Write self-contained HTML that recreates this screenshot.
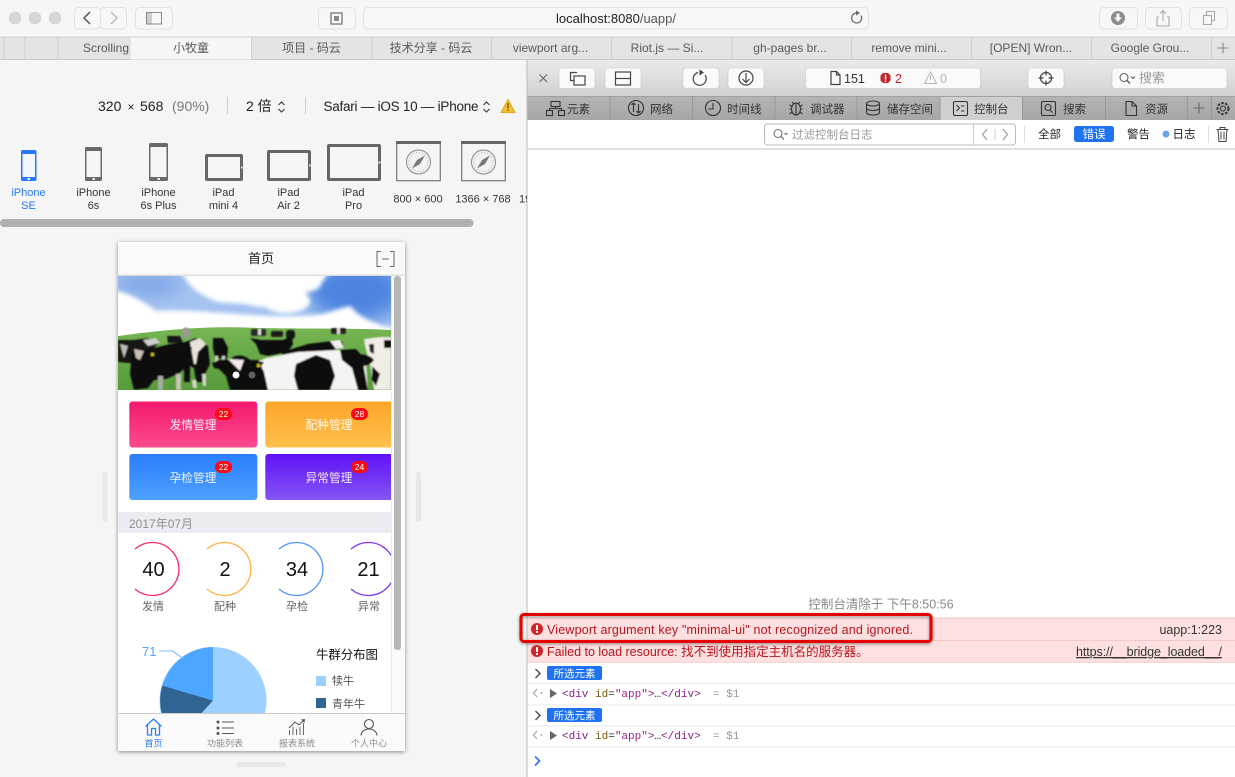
<!DOCTYPE html>
<html><head><meta charset="utf-8"><style>
html,body{margin:0;padding:0;width:1235px;height:777px;overflow:hidden;background:#f5f5f5}
svg{display:block}
svg.root{filter:blur(.3px)}
text{font-family:"Liberation Sans","Noto Sans CJK SC",sans-serif;white-space:pre}
.m{text-anchor:middle}
.tab{font-size:12px;fill:#5a5a5a;text-anchor:middle}
.dev{font-size:11px;fill:#333;text-anchor:middle}
.ic{fill:none;stroke:#444;stroke-width:1.2}
.btn{fill:#f7f7f7;stroke:#e2e2e2}
.dbtn{fill:#fafafa;stroke:#c8c8c8;stroke-width:.6}
.mono{font-family:"Liberation Mono",monospace;font-size:11px}
</style></head><body>
<svg class="root" width="1235" height="777" viewBox="0 0 1235 777" xmlns="http://www.w3.org/2000/svg">
<defs>
<linearGradient id="gp" x1="0" y1="0" x2="0" y2="1"><stop offset="0" stop-color="#f4196e"/><stop offset="1" stop-color="#fd4b8e"/></linearGradient>
<linearGradient id="go" x1="0" y1="0" x2="0" y2="1"><stop offset="0" stop-color="#fda729"/><stop offset="1" stop-color="#fec04c"/></linearGradient>
<linearGradient id="gb" x1="0" y1="0" x2="0" y2="1"><stop offset="0" stop-color="#2a7efc"/><stop offset="1" stop-color="#4fa1fe"/></linearGradient>
<linearGradient id="gv" x1="0" y1="0" x2="0" y2="1"><stop offset="0" stop-color="#6011f6"/><stop offset="1" stop-color="#8456f4"/></linearGradient>
<linearGradient id="gt" x1="0" y1="0" x2="0" y2="1"><stop offset="0" stop-color="#eaeaea"/><stop offset="1" stop-color="#d2d2d2"/></linearGradient>
<linearGradient id="gr" x1="0" y1="0" x2="0" y2="1"><stop offset="0" stop-color="#b4b4b4"/><stop offset="1" stop-color="#a6a6a6"/></linearGradient>
<linearGradient id="gg" x1="0" y1="0" x2="0" y2="1"><stop offset="0" stop-color="#76b552"/><stop offset="1" stop-color="#569a3a"/></linearGradient>
<clipPath id="cb"><rect x="0" y="0" width="273" height="114"/></clipPath>
<clipPath id="cs"><rect x="118" y="533" width="273" height="80"/></clipPath>
<clipPath id="cpie"><rect x="118" y="630" width="273" height="83"/></clipPath>
<clipPath id="ct"><rect x="118" y="395" width="273" height="110"/></clipPath>
<clipPath id="cd"><rect x="0" y="130" width="527" height="85"/></clipPath>
<filter id="sh" x="-10%" y="-10%" width="120%" height="120%"><feDropShadow dx="0" dy="1" stdDeviation="2" flood-color="#000" flood-opacity=".45"/></filter>
<filter id="sr" x="-5%" y="-30%" width="110%" height="160%"><feDropShadow dx="0" dy="1" stdDeviation="1.5" flood-color="#000" flood-opacity=".45"/></filter>
<filter id="bl" x="-20%" y="-20%" width="140%" height="140%"><feGaussianBlur stdDeviation="2"/></filter>
<filter id="bb" x="-40%" y="-40%" width="180%" height="180%"><feGaussianBlur stdDeviation="9"/></filter>
<filter id="bs" x="-20%" y="-20%" width="140%" height="140%"><feGaussianBlur stdDeviation=".7"/></filter>
<g id="compass"><rect x=".7" y=".7" width="43.6" height="39" fill="#f5f5f5" stroke="#777" stroke-width="1.2"/><rect x="0" y="0" width="45" height="3" fill="#666"/><circle cx="22.500" cy="21" r="12" fill="#f2f2f2" stroke="#888"/><circle cx="22.500" cy="21" r="9.500" fill="none" stroke="#aaa" stroke-dasharray="1 2"/><path d="M29 14.500 24 23 16 27.500 21 19Z" fill="#777"/></g>
</defs>

<!-- toolbar -->
<rect width="1235" height="37" fill="#f6f6f6"/>
<circle cx="15" cy="18" r="6.300" fill="#d6d6d6"/><circle cx="35" cy="18" r="6.300" fill="#d6d6d6"/><circle cx="55" cy="18" r="6.300" fill="#d6d6d6"/>
<rect x="74.500" y="7.500" width="26" height="21.500" rx="4" class="btn"/><rect x="100.500" y="7.500" width="26" height="21.500" rx="4" class="btn"/>
<path d="M90 12 84 18 90 24" fill="none" stroke="#555" stroke-width="1.500"/><path d="M111 12 117 18 111 24" fill="none" stroke="#bbb" stroke-width="1.500"/>
<rect x="135.500" y="7.500" width="37" height="21.500" rx="4" class="btn"/>
<rect x="146.500" y="12.500" width="15" height="11.500" fill="none" stroke="#888"/><rect x="147" y="13" width="5" height="10.500" fill="#ccc"/>
<rect x="318.500" y="7.500" width="37" height="21.500" rx="4" class="btn"/>
<rect x="331" y="13" width="11" height="11" fill="none" stroke="#777" stroke-width="1.300"/><rect x="334" y="16" width="5" height="5" fill="#888"/>
<rect x="363.500" y="7.500" width="505" height="21.500" rx="4" fill="#f7f7f7" stroke="#e2e2e2"/>
<text x="556" y="23" font-size="13" fill="#222">localhost:8080<tspan fill="#555">/uapp/</tspan></text>
<path d="M861 15.500A5 5 0 1 1 857 13" fill="none" stroke="#666" stroke-width="1.200"/><path d="M856 10.500 860 13 856 15.500Z" fill="#666"/>
<rect x="1099.500" y="7.500" width="38" height="21.500" rx="4" class="btn"/><rect x="1145.500" y="7.500" width="36" height="21.500" rx="4" class="btn"/><rect x="1189.500" y="7.500" width="38" height="21.500" rx="4" class="btn"/>
<circle cx="1118" cy="18" r="7" fill="#8c8c8c"/><path d="M1116.500 13.500h3v4h2.500l-4 4.500-4-4.500h2.500z" fill="#f6f6f6"/>
<path d="M1159 17h-2v9h12V17h-2M1163 21V11M1160 13.500l3-3 3 3" fill="none" stroke="#aaa" stroke-width="1.100"/>
<rect x="1203.500" y="15.500" width="8" height="9" fill="none" stroke="#aaa" stroke-width="1.100"/><path d="M1206.500 15v-3.500h8v9h-3" fill="none" stroke="#aaa" stroke-width="1.100"/>

<!-- tabs -->
<rect y="37" width="1235" height="22.500" fill="#e4e4e4"/>
<rect y="36.500" width="1235" height="1" fill="#d2d2d2"/><rect y="59" width="1235" height="1" fill="#c8c8c8"/>
<rect x="131" y="37.500" width="120" height="22" fill="#f6f6f6"/>
<g fill="#cfcfcf"><rect x="3.500" y="37" width="1" height="22"/><rect x="24.500" y="37" width="1" height="22"/><rect x="57.500" y="37" width="1" height="22"/><rect x="251" y="37" width="1" height="22"/><rect x="371.500" y="37" width="1" height="22"/><rect x="491" y="37" width="1" height="22"/><rect x="611" y="37" width="1" height="22"/><rect x="731.500" y="37" width="1" height="22"/><rect x="851" y="37" width="1" height="22"/><rect x="971" y="37" width="1" height="22"/><rect x="1091" y="37" width="1" height="22"/><rect x="1211" y="37" width="1" height="22"/></g>
<text x="106" y="52" class="tab">Scrolling</text><text x="191" y="52" class="tab">小牧童</text><text x="311.500" y="52" class="tab">项目 - 码云</text><text x="431" y="52" class="tab">技术分享 - 码云</text><text x="550.500" y="52" class="tab">viewport arg...</text><text x="667" y="52" class="tab">Riot.js — Si...</text><text x="790" y="52" class="tab">gh-pages br...</text><text x="909" y="52" class="tab">remove mini...</text><text x="1031" y="52" class="tab">[OPEN] Wron...</text><text x="1150" y="52" class="tab">Google Grou...</text>
<path d="M1223 42.500v11M1217.500 48h11" stroke="#888" stroke-width="1.100"/>

<!-- left panel -->
<rect y="60" width="527" height="717" fill="#f5f5f5"/>
<rect x="526.500" y="60" width="1" height="717" fill="#bdbdbd"/>
<text x="98" y="111" font-size="14" fill="#222">320</text><text x="127.500" y="111" font-size="12" fill="#222">×</text><text x="140" y="111" font-size="14" fill="#222">568</text><text x="172" y="111" font-size="14" fill="#777">(90%)</text>
<rect x="227" y="97" width="1" height="17" fill="#ccc"/>
<text x="246" y="111" font-size="14" fill="#222">2 倍</text>
<path d="M278.500 105 281.500 102 284.500 105M278.500 109 281.500 112 284.500 109" fill="none" stroke="#333" stroke-width="1.100"/>
<rect x="305" y="97" width="1" height="17" fill="#ccc"/>
<text x="323.500" y="111" font-size="13.500" fill="#222" textLength="155">Safari — iOS 10 — iPhone</text>
<path d="M483.500 105 486.500 102 489.500 105M483.500 109 486.500 112 489.500 109" fill="none" stroke="#333" stroke-width="1.100"/>
<path d="M508 99.500 515 112.500H501Z" fill="#f0bd30" stroke="#e0a820" stroke-linejoin="round"/><rect x="507.300" y="103" width="1.400" height="5.500" fill="#7a5a10"/><rect x="507.300" y="109.500" width="1.400" height="1.500" fill="#7a5a10"/>

<!-- devices -->
<g clip-path="url(#cd)">
<rect x="21" y="150" width="15.500" height="31" rx="1.500" fill="#2878f8"/><rect x="22.500" y="154" width="12.500" height="23" fill="#f2f6fe"/><rect x="27.500" y="178" width="2.500" height="2" fill="#fff"/>
<rect x="85" y="147" width="17" height="34" rx="1.500" fill="#6a6a6a"/><rect x="86.500" y="151" width="14" height="26" fill="#f5f5f5"/><rect x="92.500" y="178" width="2.500" height="2" fill="#eee"/>
<rect x="149" y="143" width="19" height="38" rx="1.500" fill="#6a6a6a"/><rect x="150.500" y="147" width="16" height="30" fill="#f5f5f5"/><rect x="157.500" y="178" width="2.500" height="2" fill="#eee"/>
<rect x="205" y="154" width="38" height="27" rx="2" fill="#666"/><rect x="208" y="157" width="32" height="21" fill="#f5f5f5"/><rect x="241" y="166.500" width="1.500" height="2" fill="#eee"/>
<rect x="267" y="150" width="44" height="31" rx="2" fill="#666"/><rect x="270" y="153" width="38" height="25" fill="#f5f5f5"/><rect x="309" y="164.500" width="1.500" height="2" fill="#eee"/>
<rect x="327" y="144" width="54" height="37" rx="2" fill="#666"/><rect x="330" y="147" width="48" height="31" fill="#f5f5f5"/><rect x="378.500" y="161.500" width="2" height="2" fill="#eee"/>
<use href="#compass" x="396" y="141"/><use href="#compass" x="461" y="141"/>
<text x="28.500" y="196" class="dev" style="fill:#2878f8">iPhone</text><text x="28.500" y="209" class="dev" style="fill:#2878f8">SE</text>
<text x="93.500" y="196" class="dev">iPhone</text><text x="93.500" y="209" class="dev">6s</text>
<text x="158.500" y="196" class="dev">iPhone</text><text x="158.500" y="209" class="dev">6s Plus</text>
<text x="223.500" y="196" class="dev">iPad</text><text x="223.500" y="209" class="dev">mini 4</text>
<text x="288.500" y="196" class="dev">iPad</text><text x="288.500" y="209" class="dev">Air 2</text>
<text x="353.500" y="196" class="dev">iPad</text><text x="353.500" y="209" class="dev">Pro</text>
<text x="418" y="202.500" class="dev">800 × 600</text><text x="483" y="202.500" class="dev">1366 × 768</text><text x="519" y="202.500" font-size="11" fill="#333">1920</text>
</g>
<rect x="0" y="219" width="473.500" height="8" rx="4" fill="#b0b0b0"/>

<!-- handles -->
<rect x="102.500" y="472" width="5" height="50" rx="2.500" fill="#e8e8e8"/><rect x="416" y="472" width="5" height="50" rx="2.500" fill="#e8e8e8"/><rect x="236" y="762" width="50" height="5" rx="2.500" fill="#e8e8e8"/>

<!-- phone -->
<rect x="118" y="242" width="287" height="509" fill="#fff" filter="url(#sh)"/>
<rect x="118" y="242" width="287" height="33" fill="#f9f9f9"/><rect x="118" y="274.500" width="287" height="1.500" fill="#dedede"/>
<text x="261" y="263" class="m" font-size="13" fill="#222">首页</text>
<path d="M381 251.500h-4v15h4M390 251.500h4v15h-4" fill="none" stroke="#666" stroke-width="1"/><path d="M382 259h7" stroke="#666"/>

<!-- banner -->
<svg x="118" y="276" width="273" height="114" viewBox="0 0 273 114">
<g clip-path="url(#cb)">
<rect width="273" height="114" fill="#a4c3ef"/>
<ellipse cx="238" cy="15" rx="48" ry="30" fill="#4d84e0" filter="url(#bb)"/>
<ellipse cx="30" cy="8" rx="34" ry="12" fill="#7fa6e8" filter="url(#bb)"/>
<g filter="url(#bl)" fill="#fff">
<path d="M63-6C70 12 84 20 100 26L128 28C150 36 168 25 184 18L200 13 212-6Z"/>
<ellipse cx="168" cy="25" rx="24" ry="12"/>
<path d="M-4 14C14 18 26 26 38 35 60 33 90 36 120 38 150 40 175 42 205 38L224 32 232 30 240 38 250 44 265 50 277 52V64H-4Z"/>
</g>
<path d="M0 60C60 52 95 50 140 52 190 53 240 52 273 54V114H0Z" fill="url(#gg)"/>
<g filter="url(#bs)">
<rect x="133" y="53" width="15" height="7" rx="2" fill="#2a2a2a"/><rect x="140" y="53" width="3" height="6" fill="#ddd"/>
<rect x="153" y="55" width="12" height="6" rx="2" fill="#1a1a1a"/>
<rect x="168" y="54" width="9" height="9" rx="3" fill="#151515"/>
<rect x="213" y="52" width="15" height="6" rx="2" fill="#222"/><rect x="219" y="52" width="3" height="6" fill="#ddd"/>
<ellipse cx="68" cy="57" rx="4.500" ry="5.500" fill="#9a9a90"/>
<path d="M49 60h13l3 7H50z" fill="#151515"/>
<path d="M132 62 143 64H165L174 60 175 68 170 76 150 80 142 78 138 68Z" fill="#111"/>
<path d="M164 76 190 68 214 65 224 65 226 72 205 76 180 80 164 80Z" fill="#111"/>
<path d="M212 65 222 64 226 72 218 73Z" fill="#eee"/>
<path d="M95 62 105 62 110 72 109 83 97 82 95 72Z" fill="#111"/>
<rect x="97" y="80" width="3" height="8" fill="#ccc"/><rect x="104" y="80" width="3" height="6" fill="#ccc"/>
<path d="M0 64H16L30 62 40 68 20 88 0 86Z" fill="#141414"/>
<path d="M2 68 10 70 6 82Z" fill="#bbb"/>
<path d="M25 64 38 62 42 67 30 70Z" fill="#ccc"/>
<path d="M62 68 78 62 90 70 92 88 88 96 84 106H78L76 92 72 90 72 106H66V88Z" fill="#111"/>
<path d="M72 66 82 62 88 68 80 76 78 88 76 88Z" fill="#e8e2d8"/>
<path d="M74 104h4l1 8h-4ZM84 98h4v12h-3Z" fill="#d8d4cc"/>
<path d="M14 76 36 72 52 68 68 66 74 72 70 90 60 98 48 103 36 104 30 112 16 114 12 98 14 76Z" fill="#111"/>
<path d="M16 73 26 75 22 84 18 82Z" fill="#c9bdb2"/>
<rect x="58" y="98" width="5" height="16" fill="#c9c2b8"/><rect x="40" y="100" width="5" height="14" fill="#aaa"/>
<rect x="33" y="77" width="3" height="3" fill="#c8c020"/>
<path d="M246 63 262 61 273 61V114H256L252 88 247 70Z" fill="#f0ece6"/>
<rect x="266" y="64" width="7" height="8" fill="#111"/><path d="M254 90 262 98 258 110 254 104Z" fill="#111"/><path d="M251 68 256 68 256 78 252 76Z" fill="#222"/>
<path d="M148 82 180 76 220 74 238 76 248 88 250 114H135L130 90Z" fill="#f4f4f2"/>
<path d="M178 88 198 79 212 84 217 100 212 114H180L176 100Z" fill="#0e0e0e"/>
<path d="M222 74 238 73 246 82 246 92 250 114H240L234 92 224 84Z" fill="#0e0e0e"/>
<path d="M236 80C240 77 252 78 256 84 252 90 244 92 238 88Z" fill="#0e0e0e"/>
<path d="M95 88C100 82 108 84 112 84 116 78 126 78 132 84L140 84 146 96 150 114H112L108 100 100 92Z" fill="#0e0e0e"/>
<path d="M110 83 126 84 122 95Z" fill="#f2ecea"/>
<path d="M94 87 108 83 112 90 106 94 96 92Z" fill="#0e0e0e"/>
<path d="M132 84 146 86 142 92 134 92Z" fill="#0e0e0e"/><rect x="139" y="88" width="3" height="3" fill="#c8c020"/>
</g>
<circle cx="118" cy="99" r="3.500" fill="#fff"/><circle cx="134" cy="99" r="3.500" fill="#fff" opacity=".35"/><circle cx="150" cy="99" r="3.500" fill="#fff" opacity=".35"/>
</g>
</svg>

<!-- scrollbar -->
<rect x="391" y="276" width="14" height="437" fill="#fafafa"/><rect x="391" y="276" width="1" height="437" fill="#eaeaea"/>
<rect x="394" y="276" width="7" height="374" rx="3" fill="#b6b6b6"/>

<!-- tiles -->
<g clip-path="url(#ct)">
<rect x="129.300" y="401.500" width="128" height="46" rx="3" fill="url(#gp)"/>
<rect x="265.300" y="401.500" width="128" height="46" rx="3" fill="url(#go)"/>
<rect x="129.300" y="454" width="128" height="46" rx="3" fill="url(#gb)"/>
<rect x="265.300" y="454" width="128" height="46" rx="3" fill="url(#gv)"/>
<g font-size="11.700" fill="#fff" text-anchor="middle" opacity=".92">
<text x="193" y="429">发情管理</text><text x="329" y="429">配种管理</text><text x="193" y="482">孕检管理</text><text x="329" y="482">异常管理</text></g>
<g fill="#fb0a14"><rect x="215" y="408" width="17" height="12" rx="6"/><rect x="351" y="408" width="17" height="12" rx="6"/><rect x="215" y="461" width="17" height="12" rx="6"/><rect x="351" y="461" width="17" height="12" rx="6"/></g>
<g font-size="8.500" fill="#fff" text-anchor="middle"><text x="223.500" y="417">22</text><text x="359.500" y="417">28</text><text x="223.500" y="470">22</text><text x="359.500" y="470">24</text></g>
</g>

<!-- date -->
<rect x="118" y="512" width="273" height="21" fill="#ebebf1"/>
<text x="129" y="528" font-size="12" fill="#8e8e93">2017年07月</text>

<!-- rings -->
<g clip-path="url(#cs)" fill="none" stroke-width="1.300">
<path d="M135 549A26.500 26.500 0 1 1 135 589" stroke="#f72573"/>
<path d="M207 549A26.500 26.500 0 1 1 207 589" stroke="#feb23f"/>
<path d="M279 549A26.500 26.500 0 1 1 279 589" stroke="#4f95fd"/>
<path d="M351 549A26.500 26.500 0 1 1 351 589" stroke="#7a38f6"/>
</g>
<g font-size="20" fill="#111" text-anchor="middle"><text x="153.500" y="576">40</text><text x="225" y="576">2</text><text x="297" y="576">34</text><text x="368.500" y="576">21</text></g>
<g font-size="11" fill="#666" text-anchor="middle"><text x="153" y="610">发情</text><text x="225" y="610">配种</text><text x="297" y="610">孕检</text><text x="369" y="610">异常</text></g>

<!-- pie -->
<g clip-path="url(#cpie)">
<circle cx="213" cy="700.500" r="53.500" fill="#9dd0ff"/>
<path d="M213 700.500 162.400 685.500A53.500 53.500 0 0 0 177 740Z" fill="#2f6493"/>
<path d="M213 700.500V647A53.500 53.500 0 0 0 162.400 685.500Z" fill="#4da6ff"/>
</g>
<text x="142" y="656" font-size="13" fill="#4da6ff">71</text>
<path d="M159 651H172.500L181 657" fill="none" stroke="#4da6ff" stroke-width=".8"/>
<text x="316" y="659" font-size="12.400" fill="#111">牛群分布图</text>
<rect x="316" y="676" width="10" height="10" fill="#9dd0ff"/><text x="332" y="684.500" font-size="11" fill="#555">犊牛</text>
<rect x="316" y="698" width="10" height="10" fill="#2f6493"/><text x="332" y="707.500" font-size="11" fill="#555">青年牛</text>

<!-- phone tab bar -->
<rect x="118" y="713" width="287" height="38" fill="#fafafa"/><rect x="118" y="713" width="287" height="1" fill="#ccc"/>
<path d="M145.500 726.500 153.500 719 161.500 726.500M147.500 725V735H151.500V728.500H155.500V735H159.500V725" fill="none" stroke="#2a7efc" stroke-width="1.300"/>
<g fill="#555"><circle cx="218" cy="722" r="1.500"/><circle cx="218" cy="728" r="1.500"/><circle cx="218" cy="733.500" r="1.500"/><rect x="222" y="721.500" width="12" height="1"/><rect x="222" y="727.500" width="12" height="1"/><rect x="222" y="733" width="12" height="1"/></g>
<path d="M289.500 735v-5M293 735v-8M296.500 735v-6M300 735v-8M303.500 735v-12" stroke="#666" fill="none"/><path d="M289 728 295 722 299 725 304 720" fill="none" stroke="#555"/><path d="M301 719.500 305 719 304.500 723Z" fill="#555"/>
<circle cx="369" cy="724" r="4.500" fill="none" stroke="#555" stroke-width="1.100"/><path d="M361 735.500C361.500 731 365 729 369 729S376.500 731 377 735.500" fill="none" stroke="#555" stroke-width="1.100"/>
<g font-size="9" text-anchor="middle" fill="#8a8a8a"><text x="153.500" y="746.500" fill="#2a7efc">首页</text><text x="225" y="746.500">功能列表</text><text x="297" y="746.500">报表系统</text><text x="369" y="746.500">个人中心</text></g>

<!-- devtools -->
<rect x="527.500" y="60" width="708" height="36" fill="url(#gt)"/>
<rect x="527.500" y="96" width="708" height="24" fill="url(#gr)"/><rect x="527.500" y="96" width="708" height="1" fill="#a0a0a0"/>
<rect x="940" y="97" width="82" height="23" fill="#cfcfcf"/>
<g fill="#999"><rect x="609.500" y="97" width="1" height="23"/><rect x="692" y="97" width="1" height="23"/><rect x="774.500" y="97" width="1" height="23"/><rect x="856.500" y="97" width="1" height="23"/><rect x="939.500" y="97" width="1" height="23"/><rect x="1022" y="97" width="1" height="23"/><rect x="1105" y="97" width="1" height="23"/><rect x="1187" y="97" width="1" height="23"/><rect x="1211" y="97" width="1" height="23"/></g>
<path d="M539.500 74.500 547 82M547 74.500 539.500 82" stroke="#666" stroke-width="1.100"/>
<rect x="559" y="68" width="36" height="20.500" rx="3" class="dbtn"/><rect x="605" y="68" width="36" height="20.500" rx="3" class="dbtn"/><rect x="683" y="68" width="36" height="20.500" rx="3" class="dbtn"/><rect x="728" y="68" width="36" height="20.500" rx="3" class="dbtn"/><rect x="805.500" y="68" width="175" height="20.500" rx="3" class="dbtn"/><rect x="1028" y="68" width="36" height="20.500" rx="3" class="dbtn"/><rect x="1112" y="68" width="115" height="20.500" rx="3" class="dbtn"/>
<path d="M577 72.500H570.500V80.500H574" class="ic"/><rect x="574" y="76" width="11" height="9" class="ic"/>
<rect x="615.500" y="72" width="15" height="13" class="ic"/><path d="M615.500 78.500H630.500" class="ic"/>
<path d="M698 72.500A6.500 6.500 0 1 0 705 75" class="ic"/><path d="M699.500 69.500 704 72.500 699.500 75.500Z" fill="#444"/>
<circle cx="746" cy="78" r="7" class="ic"/><path d="M746 73v9M742.500 79 746 82.500 749.500 79" class="ic"/>
<path d="M831 71.500H836.500L840 75V84.500H831ZM836.500 71.500V75H840" class="ic" stroke-width="1"/>
<text x="844" y="83" font-size="12.500" fill="#333">151</text>
<path d="M883 72.500h5l2.500 2.500v5l-2.500 2.500h-5l-2.500-2.500v-5z" fill="#c4252d" transform="translate(0 .5)"/><rect x="884.800" y="74.500" width="1.500" height="5" fill="#fff"/><rect x="884.800" y="80.500" width="1.500" height="1.500" fill="#fff"/>
<text x="895" y="83" font-size="12.500" fill="#c4252d">2</text>
<path d="M930.500 72 936.500 83.500H924.500Z" fill="none" stroke="#b5b5b5"/><rect x="930" y="75.500" width="1" height="4.500" fill="#b5b5b5"/>
<text x="940" y="83" font-size="12.500" fill="#b5b5b5">0</text>
<circle cx="1046" cy="78" r="5.500" class="ic"/><path d="M1046 70.500v5M1046 80.500v5M1038.500 78h5M1048.500 78h5" class="ic"/>
<circle cx="1124" cy="77.500" r="4" fill="none" stroke="#555"/><path d="M1127 80.500 1130 83.500" stroke="#555" stroke-width="1.300"/><path d="M1131 76.500 1133 78.500 1135 76.500" fill="none" stroke="#555"/>
<text x="1139" y="82.500" font-size="13" fill="#999">搜索</text>

<!-- devtools tabs -->
<g fill="none" stroke="#333" stroke-width="1.100">
<rect x="551" y="101.500" width="9" height="5"/><rect x="546.500" y="110.500" width="6" height="5"/><rect x="558.500" y="110.500" width="6" height="5"/><path d="M555.500 106.500V108.500M549.500 110.500V108.500H561.500V110.500"/>
<circle cx="636" cy="108" r="7.500"/><path d="M633.500 103v9M631.500 105 633.500 103 635.500 105M638.500 113v-9M636.500 111 638.500 113 640.500 111"/>
<circle cx="713" cy="108" r="7.500"/><path d="M713 103v6H708.500"/>
<ellipse cx="796" cy="109" rx="4.500" ry="6"/><path d="M796 103v12M792 102 794 104M800 102 798 104M789.500 105 792 106.500M802.500 105 800 106.500M789.500 109H791.500M802.500 109H800.500M789.500 114 792 112M802.500 114 800 112"/>
<ellipse cx="873" cy="103.500" rx="6.500" ry="2.500"/><path d="M866.500 103.500V112.500M879.500 103.500V112.500M866.500 108c0 1.500 3 2.500 6.500 2.500s6.500-1 6.500-2.500M866.500 112.500c0 1.500 3 2.500 6.500 2.500s6.500-1 6.500-2.500"/>
<rect x="953.500" y="101.500" width="14" height="14" rx="1.500"/><path d="M956.500 105 959.500 108 956.500 111M961 106H964.500M961 111H964.500"/>
<rect x="1041.500" y="101.500" width="14" height="14" rx="1.500"/><circle cx="1048" cy="107.500" r="3"/><path d="M1050 110 1052.500 112.500"/>
<path d="M1126 101.500H1132L1136.500 106V115.500H1126ZM1132 101.500V106H1136.500"/>
<circle cx="1223" cy="108.500" r="2.500"/><circle cx="1223" cy="108.500" r="5.500" stroke-dasharray="2.500 1.500" stroke-width="2"/>
</g>
<path d="M1199 102.500v11M1193.500 108h11" stroke="#666" stroke-width="1.100"/>
<g font-size="11.500" fill="#333"><text x="567" y="113">元素</text><text x="650" y="113">网络</text><text x="727" y="113">时间线</text><text x="810" y="113">调试器</text><text x="887" y="113">储存空间</text><text x="974" y="113">控制台</text><text x="1063" y="113">搜索</text><text x="1145" y="113">资源</text></g>

<!-- filter row -->
<rect x="527.500" y="120" width="708" height="29" fill="#fff"/><rect x="527.500" y="148.500" width="708" height="1" fill="#c2c2c2"/>
<rect x="764.500" y="124" width="251" height="21" rx="3" fill="#fff" stroke="#bcbcbc"/><rect x="973" y="124" width="1" height="21" fill="#ccc"/>
<circle cx="778" cy="133.500" r="4" fill="none" stroke="#666"/><path d="M781 136.500 784 139.500" stroke="#666" stroke-width="1.200"/><path d="M784.500 133 786 134.500 787.500 133" fill="none" stroke="#666"/>
<text x="792" y="138.500" font-size="11.500" fill="#999">过滤控制台日志</text>
<path d="M987 129 982.500 134.500 987 140M1003 129 1007.500 134.500 1003 140" fill="none" stroke="#999" stroke-width="1.100"/><rect x="994.500" y="129" width="1" height="11" fill="#ccc"/>
<rect x="1024" y="126" width="1" height="17" fill="#ddd"/>
<text x="1038" y="138" font-size="11.500" fill="#222">全部</text>
<rect x="1074" y="126" width="40" height="16" rx="2.500" fill="#1f72f2"/><text x="1094" y="138" font-size="11.500" fill="#fff" text-anchor="middle">错误</text>
<text x="1127" y="138" font-size="11.500" fill="#222">警告</text>
<circle cx="1166" cy="134" r="3.500" fill="#6ea4ef"/><text x="1172.500" y="138" font-size="11.500" fill="#222">日志</text>
<rect x="1208" y="126" width="1" height="17" fill="#ddd"/>
<path d="M1218 129.500 1219 141.500H1226L1227 129.500M1216.500 129.500H1228.500M1220 129V127.500H1225V129M1221 131.500V139.500M1224 131.500V139.500" fill="none" stroke="#444" stroke-width="1"/>

<!-- console -->
<rect x="527.500" y="149.500" width="708" height="628" fill="#fff"/>
<text x="881" y="608.500" font-size="12.500" fill="#888" text-anchor="middle">控制台清除于 下午8:50:56</text>
<rect x="527.500" y="618" width="708" height="44.500" fill="#ffe0e0"/>
<rect x="527.500" y="617.500" width="708" height="1" fill="#f5c8c8"/><rect x="527.500" y="640" width="708" height="1" fill="#f5c8c8"/><rect x="527.500" y="662" width="708" height="1" fill="#f0d8d8"/>
<g fill="#e8e8e8"><rect x="527.500" y="683" width="708" height="1"/><rect x="527.500" y="704.500" width="708" height="1"/><rect x="527.500" y="725.500" width="708" height="1"/><rect x="527.500" y="746.500" width="708" height="1"/></g>

<rect x="521" y="614.500" width="410" height="27" rx="3" fill="none" stroke="#e60000" stroke-width="3" filter="url(#sr)"/>
<circle cx="537" cy="629" r="6" fill="#d3222a"/><rect x="536" y="625" width="2" height="5" fill="#fff"/><rect x="536" y="631" width="2" height="2" fill="#fff"/>
<text x="547" y="634" font-size="12.500" fill="#b8141c" textLength="366">Viewport argument key "minimal-ui" not recognized and ignored.</text>
<text x="1222" y="634" font-size="12.500" fill="#333" text-anchor="end">uapp:1:223</text>
<circle cx="537" cy="651" r="6" fill="#d3222a"/><rect x="536" y="647" width="2" height="5" fill="#fff"/><rect x="536" y="653" width="2" height="2" fill="#fff"/>
<text x="547" y="656" font-size="12.500" fill="#b8141c">Failed to load resource: 找不到使用指定主机名的服务器。</text>
<text x="1222" y="656" font-size="12.500" fill="#333" text-anchor="end" text-decoration="underline" textLength="146">https://__bridge_loaded__/</text>

<path d="M535.500 669 540 673.500 535.500 678" fill="none" stroke="#555" stroke-width="1.500"/>
<rect x="547" y="666" width="55" height="14" rx="2" fill="#1f72f2"/><text x="574.500" y="677" font-size="10.500" fill="#fff" text-anchor="middle">所选元素</text>
<path d="M535.500 711 540 715.500 535.500 720" fill="none" stroke="#555" stroke-width="1.500"/>
<rect x="547" y="708" width="55" height="14" rx="2" fill="#1f72f2"/><text x="574.500" y="719" font-size="10.500" fill="#fff" text-anchor="middle">所选元素</text>

<path d="M537 689 533.500 693 537 697M541.500 692v2" fill="none" stroke="#aaa" stroke-width="1.300"/>
<path d="M550 689 557 693.500 550 698Z" fill="#666"/>
<text x="562" y="697" class="mono" fill="#8a1a8a">&lt;div <tspan fill="#7a5a10">id</tspan><tspan fill="#333">=</tspan><tspan fill="#a0228e">"app"</tspan>&gt;<tspan fill="#333">…</tspan>&lt;/div&gt;</text>
<text x="713" y="697" class="mono" fill="#999">= $1</text>
<path d="M537 731 533.500 735 537 739M541.500 734v2" fill="none" stroke="#aaa" stroke-width="1.300"/>
<path d="M550 731 557 735.500 550 740Z" fill="#666"/>
<text x="562" y="739" class="mono" fill="#8a1a8a">&lt;div <tspan fill="#7a5a10">id</tspan><tspan fill="#333">=</tspan><tspan fill="#a0228e">"app"</tspan>&gt;<tspan fill="#333">…</tspan>&lt;/div&gt;</text>
<text x="713" y="739" class="mono" fill="#999">= $1</text>
<path d="M535 756.500 539.500 761 535 765.500" fill="none" stroke="#2878f8" stroke-width="1.700"/>
</svg>
</body></html>
